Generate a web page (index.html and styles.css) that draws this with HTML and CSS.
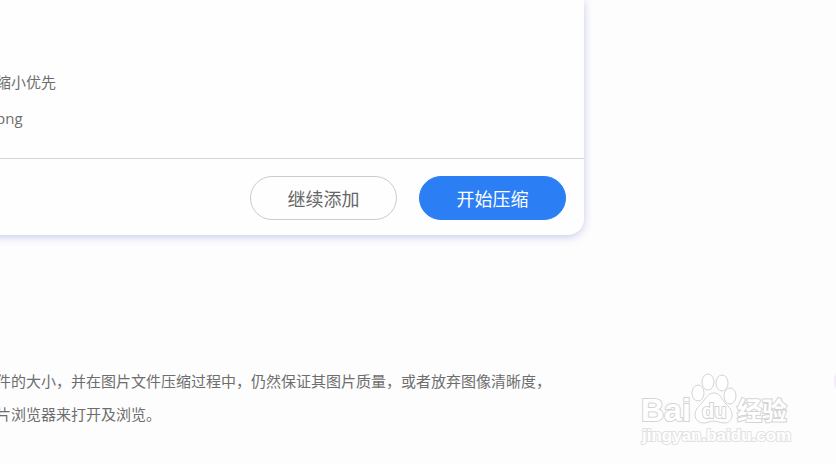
FILE: index.html
```html
<!DOCTYPE html>
<html lang="zh-CN">
<head>
    <meta charset="UTF-8">
    <meta name="viewport" content="width=device-width, initial-scale=1.0">
    <title>图片压缩</title>
    <link rel="stylesheet" href="styles.css">
</head>
<body>

    <main class="page">
        <section class="card">
            <div class="options">
                <p>缩小优先</p>
                <p>png</p>
            </div>
            <div class="actions">
                <button type="button" class="btn">继续添加</button>
                <button type="button" class="btn btn-primary">开始压缩</button>
            </div>
        </section>

        <section class="intro">
            <p>件的大小，并在图片文件压缩过程中，仍然保证其图片质量，或者放弃图像清晰度，</p>
            <p>片浏览器来打开及浏览。</p>
        </section>
    </main>

    <div class="side-dot"></div>

    <svg class="watermark" width="154" height="80" viewBox="0 0 154 80">
        <text class="brand" x="1" y="51">Bai</text>
        <ellipse cx="58" cy="23" rx="6" ry="8"/>
        <ellipse cx="68" cy="12" rx="6" ry="8"/>
        <ellipse cx="82" cy="13" rx="6" ry="8"/>
        <ellipse cx="90" cy="26" rx="6" ry="8"/>
        <path d="M74 23C68 23 66 28 62 33C58 37 55 40 55 45C55 50 59 53 64 53C68 53 70 51 74 51C78 51 80 53 84 53C89 53 92 50 92 45C92 40 89 37 85 33C81 28 80 23 74 23Z"/>
        <text class="brand-small" x="62" y="48">du</text>
        <text class="brand-cn" x="97" y="50">经验</text>
        <text class="site" x="2" y="71">jingyan.baidu.com</text>
    </svg>

</body>
</html>
```

FILE: styles.css
```css
body {
    margin: 0;
    position: relative;
    background-color: #fdfdfd;
    color: #6e6e6e;
    font-family: "Open Sans", "Noto Sans CJK SC", sans-serif;
    font-size: 15px;
    overflow: hidden;
}
p {
    margin: 0;
}
.page {
    min-height: 100vh;
}
.card {
    margin-left: -20px;
    margin-right: 252px;
    background-color: #fefefe;
    border-radius: 0 0 16px 0;
    box-shadow: 0 2px 8px rgba(80, 90, 190, 0.3);
}
.options {
    padding: 64px 0 22px 16px;
    line-height: 36px;
}
.actions {
    display: flex;
    justify-content: flex-end;
    gap: 22px;
    padding: 17px 18px 15px;
    border-top: 1px solid #d2d2d8;
}
.btn {
    width: 147px;
    height: 44px;
    padding: 0;
    border: 1px solid #ccc9d2;
    border-radius: 22px;
    background-color: #fefefe;
    color: #666;
    font-family: inherit;
    font-size: 18px;
}
.btn-primary {
    border-color: #2b7ef3;
    background-color: #2b7ef3;
    color: #fff;
}
.intro {
    margin-left: -4px;
    padding-top: 130px;
    line-height: 33px;
    white-space: nowrap;
}
.side-dot {
    position: absolute;
    top: 366px;
    right: -28px;
    width: 30px;
    height: 30px;
    border-radius: 50%;
    background-color: #f0eaf5;
}
.watermark {
    position: absolute;
    right: 42px;
    top: 370px;
    fill: #fff;
    stroke: #d4d4d4;
    stroke-width: 1px;
    font-family: "Liberation Sans", "Noto Sans CJK SC", sans-serif;
    font-weight: bold;
}
.watermark text {
    stroke-width: 2px;
    paint-order: stroke;
}
.brand {
    font-size: 32px;
}
.brand-small {
    font-size: 20px;
}
.brand-cn {
    font-size: 25px;
}
.watermark .site {
    font-size: 17px;
    stroke: #e2e2e2;
}
```
